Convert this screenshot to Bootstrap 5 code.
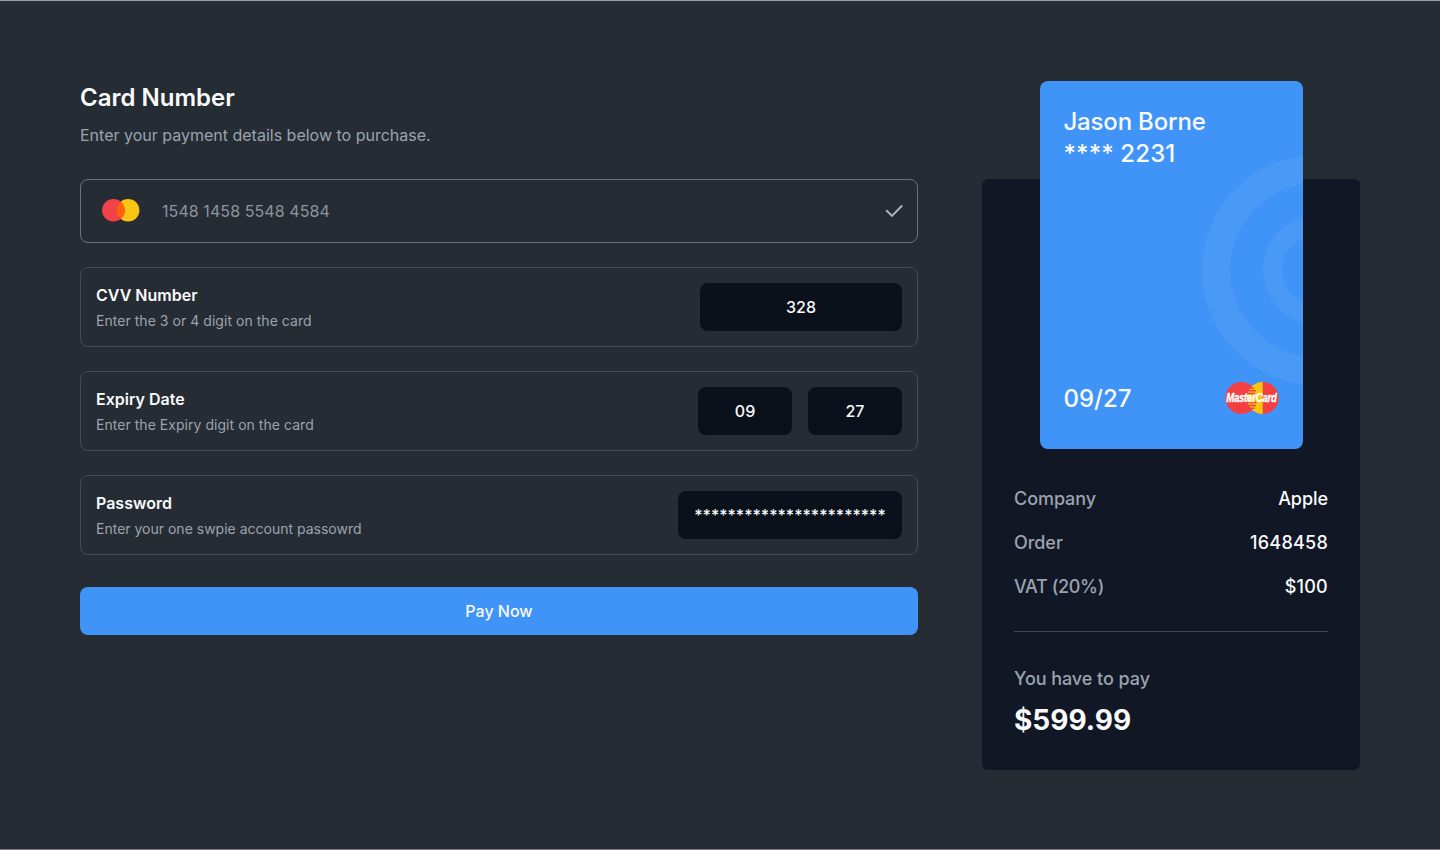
<!DOCTYPE html>
<html lang="en">
<head>
<meta charset="utf-8">
<meta name="viewport" content="width=device-width, initial-scale=1">
<title>Card payment</title>
<link href="https://cdn.jsdelivr.net/npm/bootstrap@5.3.0/dist/css/bootstrap.min.css" rel="stylesheet">
<style>
  body { background: #252c33; color: #f9fafb; font-family: Inter, "Liberation Sans", sans-serif; }
  .page { min-height: 850px; padding: 80px 80px 0; border-top: 1px solid #99a0a6; border-bottom: 1px solid #77767f; }
  .pay-layout { gap: 64px; }
  .summary { width: 378px; margin-top: 98px; height: 591px; padding: 0 32px 31px; background: #111725; border-radius: 6px; }
  .heading { font-size: 24px; line-height: 32px; font-weight: 600; padding-top: 1px; margin-bottom: 9px; }
  .muted { color: #9ca3af; }
  .intro { line-height: 24px; margin-bottom: 32px; }
  .field { height: 80px; padding: 15px; border: 1px solid #454c54; border-radius: 8px; }
  .field-number { height: 64px; padding: 0 13px 0 21px; border-color: #6d737a; }
  .field-title { font-size: 16px; line-height: 24px; font-weight: 600; margin-bottom: 4px; }
  .field-hint { font-size: 14px; line-height: 20px; }
  .pan { color: #8d949e; margin-left: 22px; letter-spacing: .08px; }
  .hint-wide { letter-spacing: .04px; }
  .value-box { height: 48px; border: 0; border-radius: 8px; background: #0b111b; color: #f9fafb; font-size: 16px; font-weight: 500; line-height: 24px; }
  .w-cvv { width: 202px; } .w-date { width: 94px; } .w-pass { width: 224px; }
  .btn-pay { height: 48px; margin-top: 8px; border: 0; border-radius: 8px; background: #4094f7; color: #f9fafb; font-weight: 500; line-height: 24px; }
  .pay-card { width: 263px; height: 368px; margin: -98px auto 36px; padding: 25px 24px 34px; border-radius: 8px; background: #4094f7; font-size: 24px; line-height: 32px; font-weight: 500; }
  .holder { letter-spacing: -.18px; }
  .masked { letter-spacing: .1px; }
  .brand { overflow: visible; margin-top: -2px; }
  .rings { top: 0; right: 0; }
  .line-item { font-size: 18px; line-height: 28px; font-weight: 500; letter-spacing: -.06px; }
  .line-item dt { font-weight: 500; }
  .line-item .vat { letter-spacing: -.35px; }
  .line-item .figures { letter-spacing: .25px; }
  .rule { height: 1px; background: #414855; margin: 30px 0 33px; }
  .total { font-size: 28px; line-height: 36px; font-weight: 700; margin-top: 9px; }
</style>
</head>
<body>
<main class="page">
  <div class="pay-layout d-flex align-items-start">
    <form class="flex-grow-1">
      <h1 class="heading">Card Number</h1>
      <p class="intro muted">Enter your payment details below to purchase.</p>
      <div class="d-flex flex-column gap-4">
        <div class="field field-number d-flex align-items-center">
          <svg width="38" height="24" viewBox="0 0 38 24" aria-hidden="true">
            <circle cx="26.1" cy="11.3" r="11.3" fill="#f9c513"/>
            <circle cx="11.4" cy="11.3" r="11.3" fill="#f04248"/>
            <path d="M18.75 2.7a11.3 11.3 0 0 1 0 17.2 11.3 11.3 0 0 1 0-17.2z" fill="#ff6108"/>
          </svg>
          <span class="pan flex-grow-1">1548 1458 5548 4584</span>
          <svg width="20" height="16" viewBox="0 0 20 16" fill="none" stroke="#aeb5be" stroke-width="1.9" aria-hidden="true"><path d="M2.2 7.2 8 12.9 18.1 2.5"/></svg>
        </div>
        <div class="field d-flex justify-content-between">
          <div>
            <h2 class="field-title">CVV Number</h2>
            <p class="field-hint hint-wide muted mb-0">Enter the 3 or 4 digit on the card</p>
          </div>
          <div class="value-box w-cvv d-flex align-items-center justify-content-center">328</div>
        </div>
        <div class="field d-flex justify-content-between">
          <div>
            <h2 class="field-title">Expiry Date</h2>
            <p class="field-hint hint-wide muted mb-0">Enter the Expiry digit on the card</p>
          </div>
          <div class="d-flex gap-3">
            <div class="value-box w-date d-flex align-items-center justify-content-center">09</div>
            <div class="value-box w-date d-flex align-items-center justify-content-center">27</div>
          </div>
        </div>
        <div class="field d-flex justify-content-between">
          <div>
            <h2 class="field-title">Password</h2>
            <p class="field-hint muted mb-0">Enter your one swpie account passowrd</p>
          </div>
          <div class="value-box w-pass d-flex align-items-center justify-content-center">***********************</div>
        </div>
        <button type="button" class="btn btn-pay w-100">Pay Now</button>
      </div>
    </form>

    <aside class="summary flex-shrink-0">
      <div class="pay-card position-relative overflow-hidden d-flex flex-column justify-content-between">
        <svg class="rings position-absolute" width="103" height="368" viewBox="0 0 103 368" fill="none" stroke="#fff" stroke-opacity=".055" aria-hidden="true">
          <circle cx="117" cy="189" r="101" stroke-width="28"/>
          <circle cx="117" cy="189" r="44.5" stroke-width="19"/>
        </svg>
        <div class="position-relative">
          <div class="holder">Jason Borne</div>
          <div class="masked">**** 2231</div>
        </div>
        <div class="position-relative d-flex justify-content-between align-items-center">
          <span>09/27</span>
          <svg class="brand" width="54" height="32" viewBox="0 0 54 32" aria-hidden="true">
            <circle cx="37.7" cy="16" r="16" fill="#f43f42"/>
            <path d="M37.7 0a16 16 0 0 0 0 32z" fill="#f9c513"/>
            <path d="M16.3 0a16 16 0 0 1 10.7 4.1 16 16 0 0 0 0 23.8A16 16 0 1 1 16.3 0z" fill="#f43f42"/>
            <path d="M24 6h5.2M23 8.8h8M22 11.6h8M22 20.6h9.5M23 23.4h8M25 26.2h4.6" stroke="#f43f42" stroke-width="1.5"/>
            <text x="26.4" y="20" text-anchor="middle" textLength="50.5" lengthAdjust="spacingAndGlyphs" font-family="Liberation Sans, sans-serif" font-size="12" font-weight="700" font-style="italic" letter-spacing="-.3" fill="#fff" stroke="#fff" stroke-width=".35">MasterCard</text>
          </svg>
        </div>
      </div>
      <dl class="d-flex flex-column gap-3 mb-0">
        <div class="line-item d-flex justify-content-between"><dt class="muted">Company</dt><dd class="mb-0">Apple</dd></div>
        <div class="line-item d-flex justify-content-between"><dt class="muted">Order</dt><dd class="figures mb-0">1648458</dd></div>
        <div class="line-item d-flex justify-content-between"><dt class="muted vat">VAT (20%)</dt><dd class="figures mb-0">$100</dd></div>
      </dl>
      <div class="rule"></div>
      <div class="line-item muted">You have to pay</div>
      <div class="total">$599.99</div>
    </aside>
  </div>
</main>
<script src="https://cdn.jsdelivr.net/npm/bootstrap@5.3.0/dist/js/bootstrap.bundle.min.js"></script>
</body>
</html>
